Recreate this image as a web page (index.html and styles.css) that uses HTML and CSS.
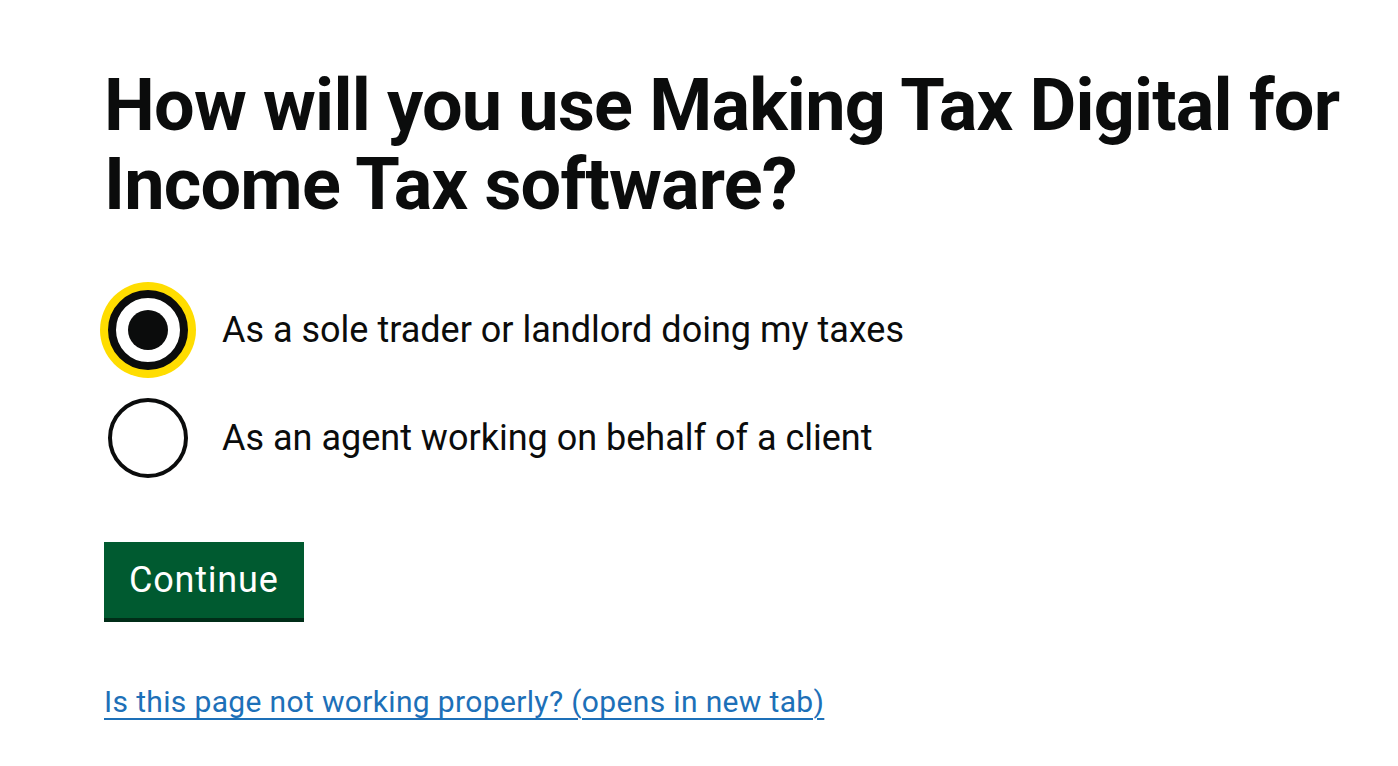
FILE: index.html
```html
<!DOCTYPE html>
<html lang="en">
<head>
<meta charset="utf-8">
<title>How will you use Making Tax Digital for Income Tax software?</title>
<link rel="stylesheet" href="styles.css">
</head>
<body>
<main class="page">
  <h1 class="heading">How will you use Making Tax Digital for Income Tax software?</h1>
  <div class="radios">
    <div class="radio-item">
      <span class="radio radio--checked radio--focus"><span class="radio__dot"></span></span>
      <span class="radio-label">As a sole trader or landlord doing my taxes</span>
    </div>
    <div class="radio-item">
      <span class="radio"></span>
      <span class="radio-label">As an agent working on behalf of a client</span>
    </div>
  </div>
  <button class="button" type="button">Continue</button>
  <p class="help"><a class="link" href="#">Is this page not working properly? (opens in new tab)</a></p>
</main>
</body>
</html>
```
FILE: styles.css
```css
html, body {
  margin: 0;
  padding: 0;
  background: #ffffff;
}
body {
  font-family: Roboto, "Noto Sans", "Liberation Sans", sans-serif;
  color: #0b0c0c;
}
.page {
  padding: 66px 0 0 104px;
}
.heading {
  margin: 0;
  width: 1270px;
  font-size: 72px;
  line-height: 79px;
  font-weight: 700;
  letter-spacing: -0.8px;
}
.radios {
  margin-top: 66px;
}
.radio-item {
  display: flex;
  align-items: center;
  min-height: 80px;
  margin-bottom: 28px;
}
.radio {
  box-sizing: border-box;
  width: 80px;
  height: 80px;
  margin-left: 4px;
  border: 4px solid #0b0c0c;
  border-radius: 50%;
  background: #fff;
  display: flex;
  align-items: center;
  justify-content: center;
  flex: none;
}
.radio--focus {
  border-width: 8px;
  box-shadow: 0 0 0 8px #ffdd00;
}
.radio__dot {
  width: 40px;
  height: 40px;
  border-radius: 50%;
  background: #0b0c0c;
}
.radio-label {
  margin-left: 34px;
  font-size: 36px;
  line-height: 50px;
}
.button {
  margin-top: 36px;
  display: inline-block;
  font-family: inherit;
  font-size: 36px;
  line-height: 40px;
  letter-spacing: 0.8px;
  color: #ffffff;
  background: #005a30;
  border: 0;
  border-radius: 0;
  box-shadow: 0 4px 0 #002d18;
  padding: 18px 25px 18px;
  height: 76px;
  cursor: pointer;
}
.help {
  margin: 64px 0 0;
  font-size: 30px;
  line-height: 40px;
  letter-spacing: 0.35px;
}
.link {
  color: #1d70b8;
  text-decoration: underline;
  text-decoration-thickness: 2px;
  text-underline-offset: 6px;
}
```
